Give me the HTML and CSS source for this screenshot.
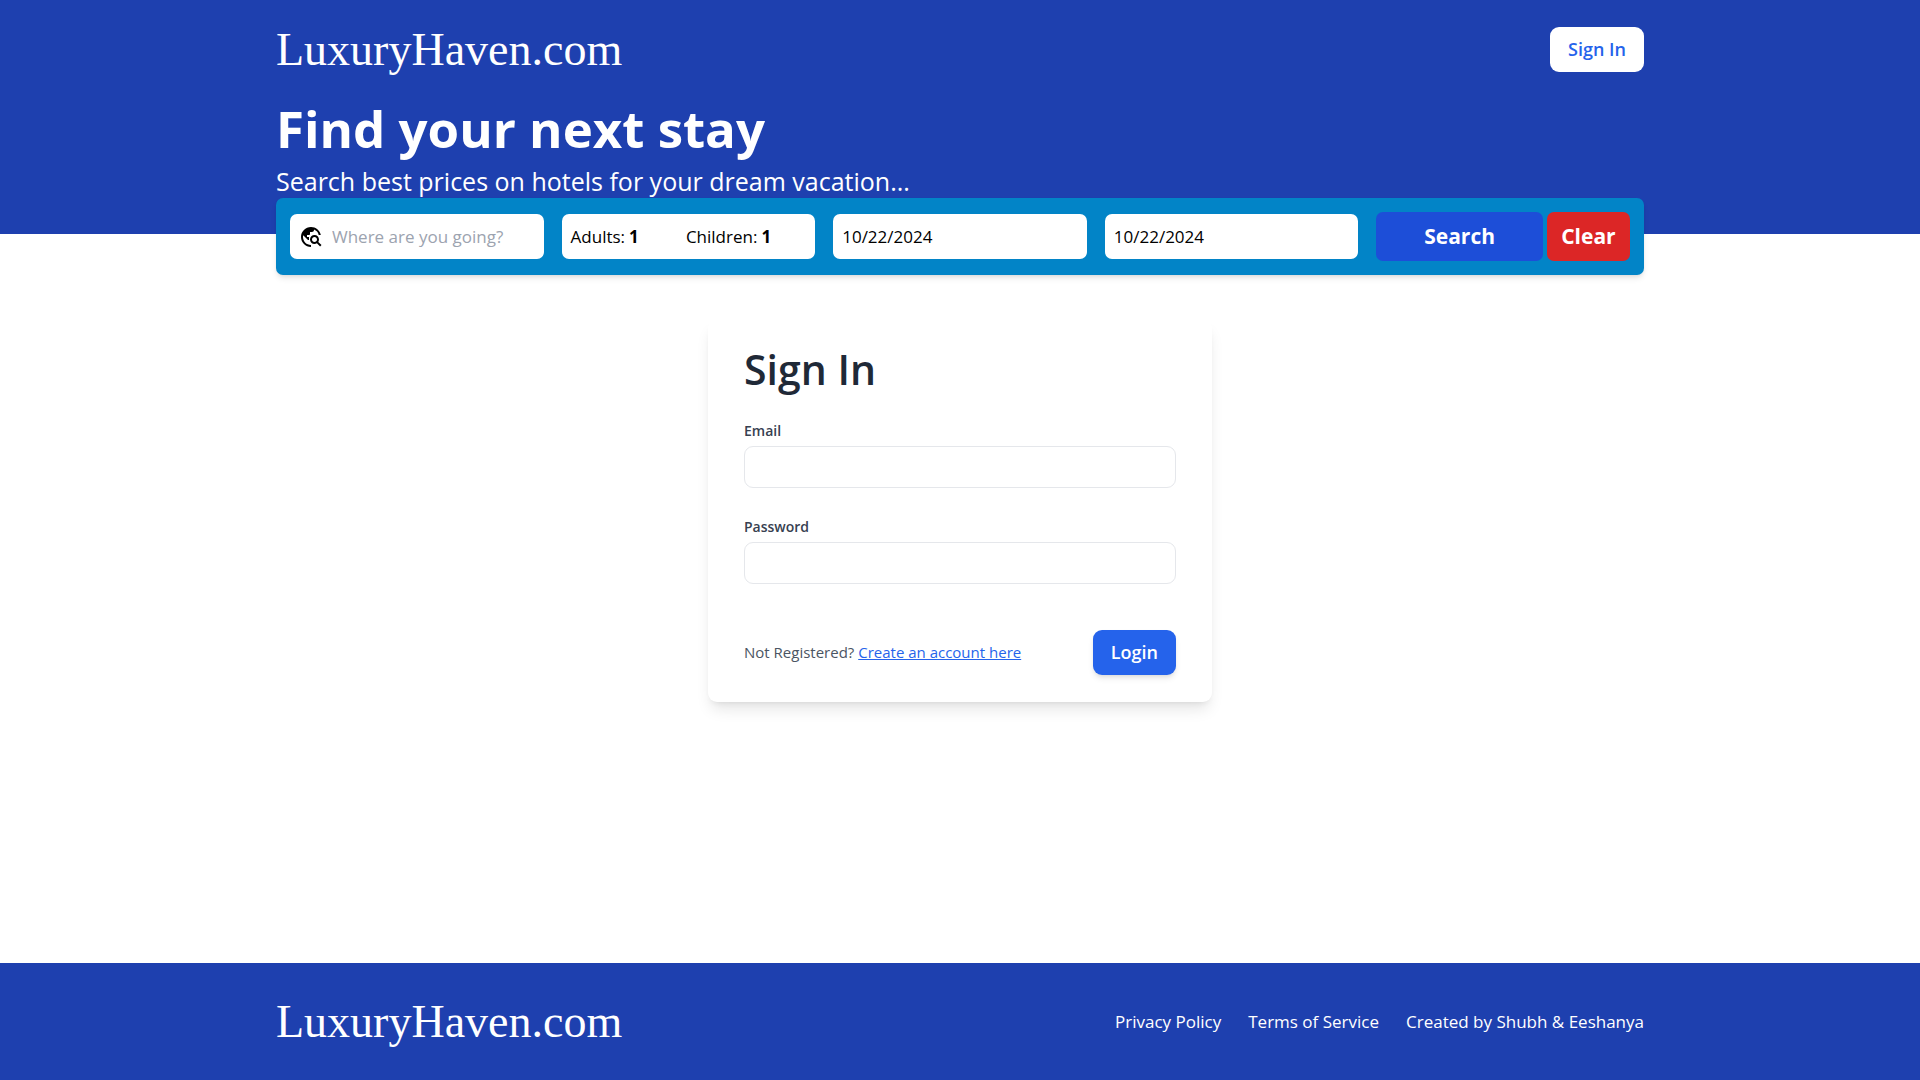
FILE: index.html
```html
<!DOCTYPE html>
<html lang="en">
<head>
<meta charset="utf-8">
<meta name="viewport" content="width=device-width, initial-scale=1">
<title>LuxuryHaven.com</title>
<link rel="stylesheet" href="styles.css">
</head>
<body>
<div class="page">
  <header class="header">
    <div class="container topbar">
      <a class="logo" href="#">LuxuryHaven.com</a>
      <a class="signin-link" href="#">Sign In</a>
    </div>
    <div class="container hero">
      <h1 class="hero-title">Find your next stay</h1>
      <p class="hero-text">Search best prices on hotels for your dream vacation...</p>
    </div>
  </header>

  <div class="container">
    <form class="search">
      <label class="search-field destination">
        <svg class="icon" viewBox="0 0 24 24" aria-hidden="true"><path d="M19.3 16.9c.4-.7.7-1.5.7-2.4 0-2.5-2-4.5-4.5-4.5S11 12 11 14.5s2 4.5 4.5 4.5c.9 0 1.7-.3 2.4-.7l3.2 3.2 1.4-1.4-3.2-3.2zm-3.8.1c-1.4 0-2.5-1.1-2.5-2.5s1.1-2.5 2.5-2.5 2.5 1.1 2.5 2.5-1.1 2.5-2.5 2.5zM12 20v2C6.48 22 2 17.52 2 12S6.48 2 12 2c4.84 0 8.87 3.44 9.8 8h-2.07A8 8 0 0 0 15 4.59V5c0 1.1-.9 2-2 2h-2v2c0 .55-.45 1-1 1H8v2h2v3H9l-4.79-4.79C4.08 10.79 4 11.38 4 12c0 4.41 3.59 8 8 8z"/></svg>
        <input class="bare-input" type="text" placeholder="Where are you going?" aria-label="Destination">
      </label>
      <div class="search-field guests">
        <label class="guest">Adults: <input class="bare-input count" type="text" inputmode="numeric" value="1"></label>
        <label class="guest">Children: <input class="bare-input count" type="text" inputmode="numeric" value="1"></label>
      </div>
      <input class="search-field date" type="text" value="10/22/2024" aria-label="Check-in date">
      <input class="search-field date" type="text" value="10/22/2024" aria-label="Check-out date">
      <div class="search-actions">
        <button class="search-button" type="submit">Search</button>
        <button class="search-button clear" type="reset">Clear</button>
      </div>
    </form>
  </div>

  <main class="main">
    <form class="card">
      <h2 class="card-title">Sign In</h2>
      <div class="field">
        <label class="field-label" for="email">Email</label>
        <input class="field-input" id="email" type="email">
      </div>
      <div class="field">
        <label class="field-label" for="password">Password</label>
        <input class="field-input" id="password" type="password">
      </div>
      <div class="card-footer">
        <span class="card-note">Not Registered? <a class="register" href="#">Create an account here</a></span>
        <button class="login" type="submit">Login</button>
      </div>
    </form>
  </main>

  <footer class="footer">
    <div class="container footer-row">
      <a class="logo" href="#">LuxuryHaven.com</a>
      <nav class="footer-links">
        <a href="#">Privacy Policy</a>
        <a href="#">Terms of Service</a>
        <a href="#">Created by Shubh &amp; Eeshanya</a>
      </nav>
    </div>
  </footer>
</div>
</body>
</html>
```
FILE: styles.css
```css
*, *::before, *::after { box-sizing: border-box; }

body {
  margin: 0;
  background: #fff;
  color: #000;
  font-family: "Segoe UI", "Open Sans", "Noto Sans", sans-serif;
  font-size: 17px;
  line-height: 27px;
}

h1, h2, p { margin: 0; }
a { color: inherit; text-decoration: none; }
input, button { font: inherit; color: inherit; }
button { border: 0; cursor: pointer; }

.page {
  display: flex;
  flex-direction: column;
  min-height: 100vh;
}

.container {
  width: 100%;
  max-width: 1440px;
  margin: 0 auto;
  padding: 0 36px;
}

/* Header */
.header {
  background: #1e40af;
  color: #fff;
  padding: 27px 0 36px;
}

.topbar, .footer-row {
  display: flex;
  align-items: center;
  justify-content: space-between;
}

.logo {
  font-family: Georgia, "Liberation Serif", serif;
  font-size: 46px;
  line-height: 45px;
}

.signin-link {
  background: #fff;
  color: #2563eb;
  font-size: 18px;
  font-weight: 600;
  padding: 9px 18px;
  border-radius: 9px;
}

.hero {
  display: flex;
  flex-direction: column;
  gap: 7px;
  margin-top: 27px;
}

.hero-title {
  font-size: 51px;
  line-height: 58px;
  font-weight: 700;
}

.hero-text {
  font-size: 25px;
  line-height: 34px;
}

/* Search bar, pulled up over the lower edge of the header */
.search {
  display: grid;
  grid-template-columns: repeat(5, minmax(0, 1fr));
  align-items: center;
  gap: 18px;
  margin-top: -36px;
  padding: 14px;
  background: #0284c7;
  border-radius: 7px;
  box-shadow: 0 4px 6px -1px rgba(0, 0, 0, 0.1), 0 2px 4px -2px rgba(0, 0, 0, 0.1);
}

.search-field {
  width: 100%;
  background: #fff;
  border: 0;
  border-radius: 7px;
  padding: 9px;
}

.bare-input {
  min-width: 0;
  padding: 0;
  border: 0;
  background: transparent;
  outline: 0;
}

.destination {
  display: flex;
  align-items: center;
  gap: 9px;
}

.destination .bare-input { flex: 1; }
.bare-input::placeholder { color: #9ca3af; opacity: 1; }

.icon {
  flex: none;
  width: 24px;
  height: 24px;
}

.guests {
  display: grid;
  grid-template-columns: 1fr 1fr;
  padding-right: 14px;
}

.guest {
  display: flex;
  gap: 4px;
}

.count {
  width: 27px;
  font-weight: 700;
}

.search-actions {
  display: grid;
  grid-template-columns: 2fr 1fr;
  gap: 4px;
}

.search-button {
  background: #1d4ed8;
  color: #fff;
  font-size: 21px;
  line-height: 31px;
  font-weight: 700;
  padding: 9px 0;
  border-radius: 7px;
}

.search-button.clear { background: #dc2626; }

/* Sign-in card */
.main {
  flex: 1;
  display: flex;
  justify-content: center;
  align-items: flex-start;
  padding: 45px 36px;
}

.card {
  width: 100%;
  max-width: 504px;
  padding: 27px 36px;
  background: #fff;
  border-radius: 9px;
  box-shadow: 0 10px 15px -3px rgba(0, 0, 0, 0.1), 0 4px 6px -4px rgba(0, 0, 0, 0.1);
}

.card-title {
  color: #1f2937;
  font-size: 41px;
  line-height: 45px;
  font-weight: 600;
}

.field {
  display: flex;
  flex-direction: column;
  gap: 4px;
  margin-top: 27px;
}

.field-label {
  color: #374151;
  font-size: 14px;
  line-height: 23px;
  font-weight: 600;
}

.field-input {
  width: 100%;
  padding: 7px 14px;
  border: 1px solid #e5e7eb;
  border-radius: 9px;
  background: #fff;
  line-height: 26px;
}

.card-footer {
  display: flex;
  align-items: center;
  justify-content: space-between;
  margin-top: 46px;
}

.card-note {
  color: #4b5563;
  font-size: 15px;
}

.register {
  color: #2563eb;
  text-decoration: underline;
}

.login {
  background: #2563eb;
  color: #fff;
  font-size: 18px;
  font-weight: 600;
  padding: 9px 18px;
  border-radius: 9px;
  box-shadow: 0 4px 6px -1px rgba(0, 0, 0, 0.1), 0 2px 4px -2px rgba(0, 0, 0, 0.1);
}

/* Footer */
.footer {
  background: #1e40af;
  color: #fff;
  padding: 36px 0;
}

.footer-links {
  display: flex;
  gap: 27px;
}
```
